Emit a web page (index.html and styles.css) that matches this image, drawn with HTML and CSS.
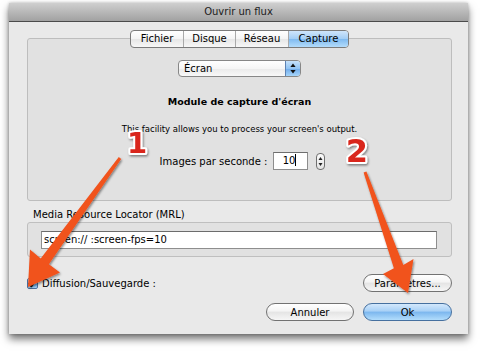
FILE: index.html
```html
<!DOCTYPE html>
<html lang="fr">
<head>
<meta charset="UTF-8" />
<title>Ouvrir un flux</title>
<link rel="stylesheet" href="styles.css">
</head>
<body>

<div class="window">
  <div class="titlebar">Ouvrir un flux</div>
  <div class="content">

    <div class="groupbox">
      <div class="tabs">
        <span class="tab tab-fichier">Fichier</span>
        <span class="tab tab-disque">Disque</span>
        <span class="tab tab-reseau">Réseau</span>
        <span class="tab tab-capture selected">Capture</span>
      </div>

      <div class="popup">
        <span class="popup-label">Écran</span>
        <span class="popup-arrows">
          <svg width="14" height="15" viewBox="0 0 14 15">
            <path d="M7 2.5 L9.6 6 L4.4 6 Z" fill="#111"/>
            <path d="M4.4 9 L9.6 9 L7 12.5 Z" fill="#111"/>
          </svg>
        </span>
      </div>

      <div class="module-title">Module de capture d'écran</div>
      <div class="module-desc">This facility allows you to process your screen's output.</div>

      <div class="fps-row">
        <span class="fps-label">Images par seconde :</span>
        <span class="fps-field">10<i class="caret"></i></span>
        <span class="stepper">
          <svg width="9" height="17" viewBox="0 0 9 17">
            <path d="M4.5 4 L6.5 7 L2.5 7 Z" fill="#222"/>
            <path d="M2.5 10 L6.5 10 L4.5 13 Z" fill="#222"/>
          </svg>
        </span>
      </div>
    </div>

    <div class="mrl-label">Media Resource Locator (MRL)</div>
    <div class="mrl-box">
      <div class="mrl-field">screen:// :screen-fps=10</div>
    </div>

    <div class="options-row">
      <label class="check">
        <span class="checkbox">
          <svg width="11" height="11" viewBox="0 0 11 11">
            <path d="M2.2 5.6 L4.4 8.4 L9 1.6" fill="none" stroke="#111" stroke-width="1.7" stroke-linecap="round" stroke-linejoin="round"/>
          </svg>
        </span>
        Diffusion/Sauvegarde :
      </label>
      <button class="btn">Paramètres...</button>
    </div>

    <div class="actions">
      <button class="btn">Annuler</button>
      <button class="btn default">Ok</button>
    </div>

  </div>
</div>

<!-- annotations par-dessus la fenêtre -->
<svg class="annotations" width="480" height="354" viewBox="0 0 480 354">
  <defs>
    <filter id="shadow" x="-20%" y="-20%" width="140%" height="140%">
      <feDropShadow dx="1" dy="1.5" stdDeviation="1.2" flood-color="#000" flood-opacity="0.45"/>
    </filter>
  </defs>
  <g filter="url(#shadow)" fill="#f1521d">
    <polygon points="121.2,158.9 48.9,264.3 60,272.5 28,287 30,249.5 40.7,258.5 118.8,157.1"/>
    <polygon points="366.4,171.5 403.3,264.9 413.5,259 408,293 383,274 393.9,268.3 363.6,172.5"/>
  </g>
  <g class="num" filter="url(#shadow)">
    <text class="num-1" x="137" y="153">1</text>
    <text class="num-2" x="357" y="162">2</text>
  </g>
</svg>

</body>
</html>
```

FILE: styles.css
```css
body {
  margin: 0;
  background: #fff;
  font-family: "DejaVu Sans", sans-serif;
  font-size: 10px;
  color: #000;
  width: 480px;
  height: 354px;
  overflow: hidden;
  position: relative;
}
.window {
  margin: 3px 0 0 9px;
  width: 459px;
  height: 331px;
  background: #e9e9e9;
  box-shadow: 0 5px 8px rgba(0, 0, 0, 0.55), 0 0 3px rgba(0, 0, 0, 0.25);
}
.titlebar {
  height: 18px;
  line-height: 18px;
  text-align: center;
  color: #1c1c1c;
  background: linear-gradient(#cfcfcf, #a1a1a1);
  border-bottom: 1px solid #4b4b4b;
}
.content {
  padding: 16px 16px 0 18px;
}
.groupbox {
  border: 1px solid #bdbdbd;
  border-radius: 3px;
  background: #e1e1e1;
  padding-bottom: 30px;
  display: flex;
  flex-direction: column;
  align-items: center;
}
.tabs {
  margin-top: -9px;
  display: flex;
  height: 16px;
  border: 1px solid #7b7b7b;
  border-radius: 4px;
  overflow: hidden;
  background: linear-gradient(#ffffff, #f4f4f4 50%, #e6e6e6 51%, #f7f7f7);
}
.tab {
  line-height: 16px;
  text-align: center;
  border-left: 1px solid #a9a9a9;
}
.tab:first-child { border-left: none; }
.tab-fichier { width: 52px; }
.tab-disque { width: 51px; }
.tab-reseau { width: 52px; }
.tab-capture { width: 59px; }
.tab.selected {
  background: linear-gradient(#cfe5fb, #a2cdf5 50%, #7fbaf0 51%, #b3dcfb);
}
.popup {
  margin-top: 12px;
  width: 123px;
  height: 17px;
  box-sizing: border-box;
  border: 1px solid #878787;
  border-radius: 4px;
  overflow: hidden;
  display: flex;
  background: linear-gradient(#ffffff, #f6f6f6 50%, #eaeaea 51%, #f8f8f8);
}
.popup-label {
  flex: 1;
  padding-left: 5px;
  line-height: 15px;
}
.popup-arrows {
  width: 14px;
  border-left: 1px solid #5d82b3;
  background: linear-gradient(#c6e1fa, #92c4f3 50%, #6eaaea 51%, #a6d5fa);
}
.popup-arrows svg { display: block; }
.module-title {
  margin-top: 18px;
  font-size: 9.5px;
  font-weight: bold;
  line-height: 13px;
}
.module-desc {
  margin-top: 15px;
  font-size: 8.5px;
  line-height: 12px;
}
.fps-row {
  margin-top: 17px;
  display: flex;
  align-items: center;
  padding-left: 6px;
}
.fps-field {
  margin-left: 6px;
  width: 35px;
  height: 18px;
  box-sizing: border-box;
  border: 1px solid #8d8d8d;
  border-top-color: #6e6e6e;
  background: #fff;
  line-height: 16px;
  text-align: right;
  padding-right: 11px;
}
.caret {
  display: inline-block;
  width: 1px;
  height: 12px;
  background: #000;
  vertical-align: -2px;
}
.stepper {
  margin-left: 8px;
  width: 9px;
  height: 17px;
  box-sizing: border-box;
  border: 1px solid #6f6f6f;
  border-radius: 4px;
  background: linear-gradient(#fbfbfb, #e4e4e4);
}
.stepper svg { display: block; margin: -1px 0 0 -1px; }
.mrl-label {
  margin: 7px 0 1px 6px;
  line-height: 13px;
}
.mrl-box {
  border: 1px solid #bfbfbf;
  border-radius: 3px;
  background: #e1e1e1;
  padding: 8px 14px 7px 13px;
}
.mrl-field {
  height: 18px;
  box-sizing: border-box;
  border: 1px solid #8e8e8e;
  border-top-color: #6c6c6c;
  background: #fff;
  line-height: 16px;
  padding-left: 2px;
}
.options-row {
  margin-top: 17px;
  display: flex;
  justify-content: space-between;
  align-items: center;
}
.check {
  display: flex;
  align-items: center;
  gap: 4px;
}
.checkbox {
  width: 11px;
  height: 11px;
  box-sizing: border-box;
  border: 1px solid #4d6f9d;
  border-radius: 2px;
  background: linear-gradient(#c4e0fa, #86bdf2 50%, #6aa8ea 51%, #a8d6fa);
}
.checkbox svg { display: block; margin: -1px 0 0 -1px; }
.btn {
  width: 89px;
  height: 18px;
  padding: 0;
  font-family: "DejaVu Sans", sans-serif;
  font-size: 10px;
  color: #000;
  border: 1px solid #727272;
  border-radius: 9px;
  background: linear-gradient(#ffffff, #f4f4f4 45%, #e4e4e4 50%, #f6f6f6);
}
.btn.default {
  border-color: #46709f;
  background: linear-gradient(#d3e8fc, #a7d0f6 45%, #7bb6ee 50%, #b2ddfc);
}
.actions {
  margin-top: 11px;
  display: flex;
  justify-content: flex-end;
  gap: 9px;
}
.actions .btn:first-child { width: 88px; }
.annotations {
  position: absolute;
  top: 0;
  left: 0;
  pointer-events: none;
}
.num text {
  font-family: "DejaVu Sans", sans-serif;
  font-weight: bold;
  text-anchor: middle;
  fill: #d9261a;
  stroke: #fff;
  stroke-width: 4px;
  stroke-linejoin: round;
  paint-order: stroke;
}
.num .num-1 { font-size: 29px; }
.num .num-2 { font-size: 32px; }
```
